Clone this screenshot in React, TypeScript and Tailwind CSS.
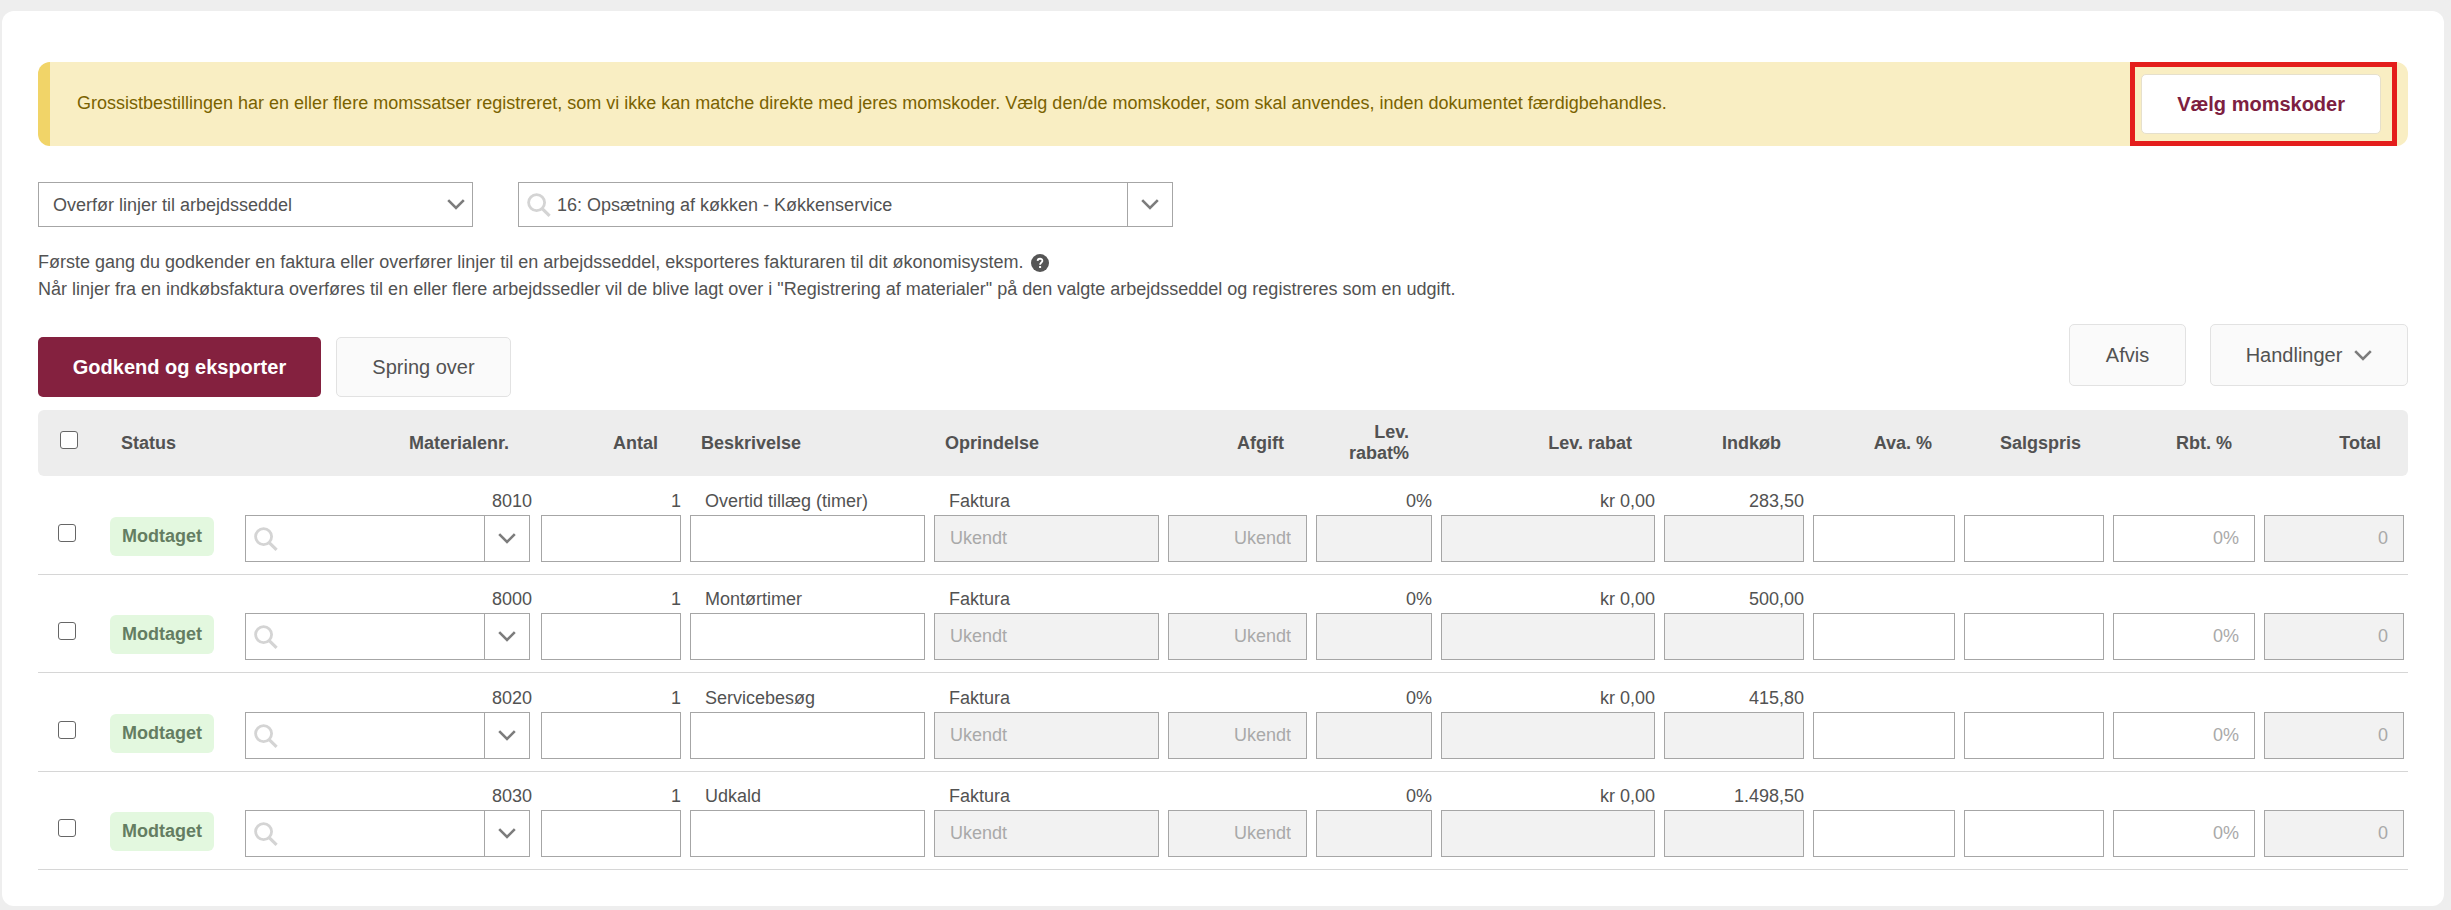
import { FC } from "react";

type Line = {
  nr: string;
  beskrivelse: string;
  indkob: string;
};

const lines: Line[] = [
  { nr: "8010", beskrivelse: "Overtid tillæg (timer)", indkob: "283,50" },
  { nr: "8000", beskrivelse: "Montørtimer", indkob: "500,00" },
  { nr: "8020", beskrivelse: "Servicebesøg", indkob: "415,80" },
  { nr: "8030", beskrivelse: "Udkald", indkob: "1.498,50" },
];

const Chevron: FC = () => (
  <svg className="h-[11px] w-[18px] shrink-0" viewBox="0 0 18 11" fill="none" stroke="#7c7c7c" strokeWidth="2.6" aria-hidden="true">
    <path d="M1.2 1.2 L9 9 L16.8 1.2" />
  </svg>
);

const SearchIcon: FC = () => (
  <svg className="size-6 shrink-0" viewBox="0 0 24 24" fill="none" stroke="#d4d4d4" strokeWidth="2.8" aria-hidden="true">
    <circle cx="9.6" cy="9.6" r="8" />
    <path d="M15.2 15.6 L22.6 22.8" strokeWidth="3.2" />
  </svg>
);

const HelpIcon: FC = () => (
  <svg className="size-[18px] shrink-0" viewBox="0 0 18 18" aria-hidden="true">
    <circle cx="9" cy="9" r="9" fill="#555" />
    <path d="M6.6 6.9 C6.7 4 11.5 4.1 11.4 6.9 C11.3 8.5 9.1 8.7 9.1 10.8" fill="none" stroke="#fff" strokeWidth="1.8" />
    <rect x="8.1" y="12" width="2" height="2" fill="#fff" />
  </svg>
);

const Tick: FC<{ label: string }> = ({ label }) => (
  <input
    type="checkbox"
    aria-label={label}
    className="block size-[18px] appearance-none rounded-[3px] border border-[#666666] bg-white checked:bg-[#84213f]"
  />
);

const Field: FC<{ label: string; text?: string; right?: boolean; disabled?: boolean }> = ({ label, text, right, disabled }) => (
  <input
    type="text"
    aria-label={label}
    placeholder={text}
    disabled={disabled}
    className={`block h-[47px] w-full border border-[#a6a6a6] bg-white px-[15px] placeholder:text-[#a9a9a9] disabled:bg-[#f2f2f2] ${right ? "text-right" : ""}`}
  />
);

const cell = "border-b border-[#d6d6d6] pb-3 pl-[5px] pr-1 align-bottom";
const value = "mb-[2px] h-6 leading-6 text-right";
const textValue = "mb-[2px] h-6 pl-[15px] leading-6";
const plainButton = "rounded-[5px] border border-[#e2e2e2] bg-[#fafafa] text-xl";

const App: FC = () => {
  return (
    <div className="bg-[#eeeeee] pt-[11px] pr-[7px] pb-1 pl-[2px] font-['Liberation_Sans',Arial,sans-serif] text-lg text-[#525252]">
      <main className="rounded-xl bg-white px-9 pt-[51px] pb-9">
        {/* VAT code warning */}
        <div className="flex h-[84px] items-center justify-between rounded-xl border-l-12 border-[#f1d468] bg-[#f9eec3] pr-[11px] pl-[27px] text-[#7a6200]">
          <p className="pb-[2px]">
            Grossistbestillingen har en eller flere momssatser registreret, som vi ikke kan matche direkte med jeres momskoder. Vælg den/de momskoder, som skal anvendes, inden dokumentet færdigbehandles.
          </p>
          <div className="shrink-0 border-[5px] border-[#e41e1c] py-[7px] pr-[11px] pl-[6px]">
            <button className="h-[60px] rounded-[5px] border border-[#e6e0cc] bg-white px-[35px] text-xl font-bold text-[#7d2040]">
              Vælg momskoder
            </button>
          </div>
        </div>

        {/* Transfer target */}
        <div className="mt-9 flex items-start gap-[45px]">
          <div className="relative w-[435px]">
            <select aria-label="Handling for linjer" className="block h-[45px] w-full appearance-none border border-[#a6a6a6] bg-white px-[14px]">
              <option>Overfør linjer til arbejdsseddel</option>
            </select>
            <span className="pointer-events-none absolute inset-y-0 right-2 flex items-center">
              <Chevron />
            </span>
          </div>
          <div className="flex h-[45px] w-[655px] border border-[#a6a6a6]">
            <label className="flex grow items-center gap-[6px] pl-2">
              <SearchIcon />
              <input type="text" aria-label="Arbejdsseddel" defaultValue="16: Opsætning af køkken - Køkkenservice" className="grow" />
            </label>
            <button aria-label="Vis arbejdssedler" className="flex w-[45px] shrink-0 items-center justify-center border-l border-[#a6a6a6]">
              <Chevron />
            </button>
          </div>
        </div>

        <div className="mt-[22px] leading-[27px]">
          <p className="flex items-center gap-2">
            Første gang du godkender en faktura eller overfører linjer til en arbejdsseddel, eksporteres fakturaren til dit økonomisystem.
            <HelpIcon />
          </p>
          <p>
            Når linjer fra en indkøbsfaktura overføres til en eller flere arbejdssedler vil de blive lagt over i "Registrering af materialer" på den valgte arbejdsseddel og registreres som en udgift.
          </p>
        </div>

        {/* Actions */}
        <div className="mt-[21px] flex items-start justify-between">
          <div className="mt-[13px] flex gap-[15px]">
            <button className="h-[60px] w-[283px] rounded-[5px] bg-[#84213f] text-xl font-bold text-white">Godkend og eksporter</button>
            <button className={`${plainButton} h-[60px] w-[175px]`}>Spring over</button>
          </div>
          <div className="flex gap-6">
            <button className={`${plainButton} h-[62px] w-[117px]`}>Afvis</button>
            <button className={`${plainButton} flex h-[62px] w-[198px] items-center justify-center gap-3`}>
              Handlinger
              <Chevron />
            </button>
          </div>
        </div>

        {/* Order lines */}
        <table className="mt-[13px] w-full table-fixed border-separate border-spacing-0">
          <colgroup>
            <col className="w-[67px]" />
            <col className="w-[135px]" />
            <col className="w-[296px]" />
            <col className="w-[149px]" />
            <col className="w-[244px]" />
            <col className="w-[234px]" />
            <col className="w-[148px]" />
            <col className="w-[125px]" />
            <col className="w-[223px]" />
            <col className="w-[149px]" />
            <col className="w-[151px]" />
            <col className="w-[149px]" />
            <col className="w-[151px]" />
            <col className="w-[149px]" />
          </colgroup>
          <thead>
            <tr className="h-[66px] bg-[#ededed] text-right leading-[21px] *:pr-[27px]">
              <th className="rounded-l-md pb-[6px] pl-[22px]">
                <Tick label="Vælg alle linjer" />
              </th>
              <th className="pl-4 text-left">Status</th>
              <th>Materialenr.</th>
              <th>Antal</th>
              <th className="pl-4 text-left">Beskrivelse</th>
              <th className="pl-4 text-left">Oprindelse</th>
              <th>Afgift</th>
              <th>Lev. rabat%</th>
              <th>Lev. rabat</th>
              <th>Indkøb</th>
              <th>Ava. %</th>
              <th>Salgspris</th>
              <th>Rbt. %</th>
              <th className="rounded-r-md">Total</th>
            </tr>
          </thead>
          <tbody>
            {lines.map((line) => (
              <tr key={line.nr} className="odd:h-[99px] even:h-[98px]">
                <td className="border-b border-[#d6d6d6] pb-8 pl-5 align-bottom">
                  <Tick label={`Vælg linje ${line.nr}`} />
                </td>
                <td className="border-b border-[#d6d6d6] pb-[18px] pl-[5px] align-bottom">
                  <span className="flex h-[39px] w-[104px] items-center justify-center rounded-md bg-[#e3f8df] pb-[2px] font-bold text-[#647d62]">Modtaget</span>
                </td>
                <td className={cell}>
                  <div className={value}>{line.nr}</div>
                  <div className="mr-[2px] flex h-[47px] border border-[#a6a6a6]">
                    <label className="flex min-w-0 grow items-center pl-2">
                      <SearchIcon />
                      <input type="text" aria-label="Materialenr." className="min-w-0 grow" />
                    </label>
                    <button aria-label="Vis materialer" className="flex w-[45px] shrink-0 items-center justify-center border-l border-[#a6a6a6]">
                      <Chevron />
                    </button>
                  </div>
                </td>
                <td className={cell}>
                  <div className={value}>1</div>
                  <Field label="Antal" />
                </td>
                <td className={cell}>
                  <div className={textValue}>{line.beskrivelse}</div>
                  <Field label="Beskrivelse" />
                </td>
                <td className={cell}>
                  <div className={textValue}>Faktura</div>
                  <Field label="Oprindelse" text="Ukendt" disabled />
                </td>
                <td className={cell}>
                  <Field label="Afgift" text="Ukendt" right disabled />
                </td>
                <td className={cell}>
                  <div className={value}>0%</div>
                  <Field label="Lev. rabat%" disabled />
                </td>
                <td className={cell}>
                  <div className={value}>kr 0,00</div>
                  <Field label="Lev. rabat" disabled />
                </td>
                <td className={cell}>
                  <div className={value}>{line.indkob}</div>
                  <Field label="Indkøb" disabled />
                </td>
                <td className={cell}>
                  <Field label="Ava. %" />
                </td>
                <td className={cell}>
                  <Field label="Salgspris" />
                </td>
                <td className={cell}>
                  <Field label="Rbt. %" text="0%" right />
                </td>
                <td className={cell}>
                  <Field label="Total" text="0" right disabled />
                </td>
              </tr>
            ))}
          </tbody>
        </table>
      </main>
    </div>
  );
};

export default App;
